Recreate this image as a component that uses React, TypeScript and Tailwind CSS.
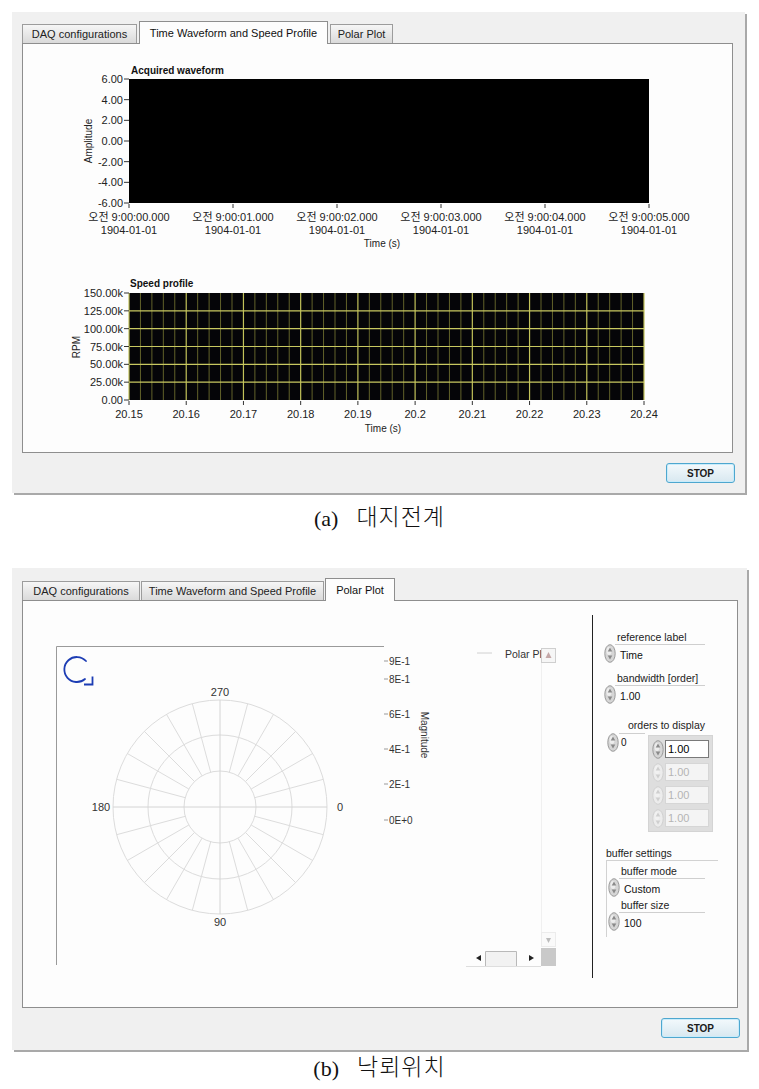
import React from "react";

const ui = "font-['Liberation_Sans','Noto_Sans_CJK_KR',sans-serif]";

function Tab({ label, active, className }: { label: string; active?: boolean; className: string }) {
  return (
    <div
      className={
        active
          ? `relative z-10 -mb-px flex h-[23px] items-center justify-center border border-b-0 border-[#8e8e8e] bg-[#fdfdfd] text-[11px] text-[#111] ${className}`
          : `flex h-[19px] items-center justify-center border border-b-0 border-[#9c9c9c] bg-linear-to-b from-[#f6f6f6] to-[#dadada] text-[11px] text-[#222] ${className}`
      }
    >
      {label}
    </div>
  );
}

function StopButton({ className }: { className: string }) {
  return (
    <div
      className={`flex h-[20px] items-center justify-center rounded-[3px] border border-[#4ea7cf] bg-linear-to-b from-[#f3f9fc] to-[#d8e8f0] text-[10px] font-bold text-[#1a1a1a] shadow-[inset_0_0_0_1px_#c9ecfb] ${className}`}
    >
      STOP
    </div>
  );
}

function Spinner({ dim }: { dim?: boolean }) {
  return (
    <svg width={12} height={19} viewBox="0 0 12 19" className="block shrink-0">
      <ellipse cx={6} cy={9.5} rx={5.2} ry={8.8} fill={dim ? "#ececec" : "#d6d6d6"} stroke={dim ? "#d0d0d0" : "#9a9a9a"} />
      <ellipse cx={5} cy={7} rx={2.5} ry={4} fill="#f2f2f2" opacity={0.8} />
      <path d="M6 3.5 L8.3 7.5 H3.7Z" fill={dim ? "#cfcfcf" : "#8a8a8a"} />
      <path d="M6 15.5 L8.3 11.5 H3.7Z" fill={dim ? "#cfcfcf" : "#8a8a8a"} />
    </svg>
  );
}

function WaveformGraph() {
  const yLabels = ["6.00", "4.00", "2.00", "0.00", "-2.00", "-4.00", "-6.00"];
  return (
    <svg width={630} height={188} viewBox="70 62 630 188" className="block">
      <text x={131} y={74} fontSize={10} fontWeight="bold" fill="#111">
        Acquired waveform
      </text>
      <rect x={129} y={79} width={520} height={124} fill="#000" />
      {yLabels.map((l, k) => {
        const y = 79 + (k * 124) / 6;
        return (
          <g key={l}>
            <line x1={124} x2={129} y1={y} y2={y} stroke="#333" />
            <text x={123} y={y + 4} fontSize={11} textAnchor="end" fill="#222">
              {l}
            </text>
          </g>
        );
      })}
      <text transform="rotate(-90 92 141)" x={92} y={141} fontSize={10} textAnchor="middle" fill="#222">
        Amplitude
      </text>
      {[0, 1, 2, 3, 4, 5].map((i) => {
        const x = 129 + i * 104;
        return (
          <g key={i}>
            <line x1={x} x2={x} y1={204} y2={208} stroke="#333" />
            <text x={x} y={221} fontSize={11} textAnchor="middle" fill="#222">
              {`오전 9:00:0${i}.000`}
            </text>
            <text x={x} y={234} fontSize={11} textAnchor="middle" fill="#222">
              1904-01-01
            </text>
          </g>
        );
      })}
      <text x={382} y={247} fontSize={10} textAnchor="middle" fill="#222">
        Time (s)
      </text>
    </svg>
  );
}

function SpeedGraph() {
  const yLabels = ["150.00k", "125.00k", "100.00k", "75.00k", "50.00k", "25.00k", "0.00"];
  const xLabels = ["20.15", "20.16", "20.17", "20.18", "20.19", "20.2", "20.21", "20.22", "20.23", "20.24"];
  const left = 129;
  const right = 644;
  const top = 293;
  const bottom = 400;
  const step = (right - left) / 9;
  const minors: number[] = [];
  for (let i = 0; i < 45; i++) if (i % 5 !== 0) minors.push(left + (i * step) / 5);
  return (
    <svg width={630} height={160} viewBox="70 276 630 160" className="block">
      <text x={130} y={287} fontSize={10} fontWeight="bold" fill="#111">
        Speed profile
      </text>
      <rect x={left} y={top} width={right - left} height={bottom - top} fill="#050508" />
      {minors.map((x) => (
        <line key={x} x1={x} x2={x} y1={top} y2={bottom} stroke="#62622a" strokeWidth={1} />
      ))}
      {xLabels.map((_, i) => {
        const x = left + i * step;
        return <line key={i} x1={x} x2={x} y1={top} y2={bottom} stroke="#c2c25a" strokeWidth={1.2} />;
      })}
      {yLabels.map((l, k) => {
        const y = top + (k * (bottom - top)) / 6;
        return (
          <g key={l}>
            {k > 0 && k < 6 ? <line x1={left} x2={right} y1={y} y2={y} stroke="#c8c860" strokeWidth={1.2} /> : null}
            <line x1={124} x2={129} y1={y} y2={y} stroke="#333" />
            <text x={123} y={y + 4} fontSize={11} textAnchor="end" fill="#222">
              {l}
            </text>
          </g>
        );
      })}
      <text transform="rotate(-90 80 347)" x={80} y={347} fontSize={10} textAnchor="middle" fill="#222">
        RPM
      </text>
      {xLabels.map((l, i) => {
        const x = left + i * step;
        return (
          <g key={l}>
            <line x1={x} x2={x} y1={401} y2={405} stroke="#333" />
            <text x={x} y={418} fontSize={11} textAnchor="middle" fill="#222">
              {l}
            </text>
          </g>
        );
      })}
      <text x={383} y={432} fontSize={10} textAnchor="middle" fill="#222">
        Time (s)
      </text>
    </svg>
  );
}

function PolarGraph() {
  const cx = 220;
  const cy = 807;
  const rings = [36, 72, 107];
  const spokes: number[] = [];
  for (let i = 0; i < 24; i++) if (i % 6 !== 0) spokes.push((i * 15 * Math.PI) / 180);
  const mag = [
    ["9E-1", 661],
    ["8E-1", 679],
    ["6E-1", 714],
    ["4E-1", 749],
    ["2E-1", 784],
    ["0E+0", 820],
  ] as const;
  return (
    <svg width={510} height={335} viewBox="50 640 510 335" className="block">
      <path d="M56.5 965 V646.5 H384" stroke="#9a9a9a" fill="none" />
      {/* rotation direction icon */}
      <path d="M86 661 A12.5 12.5 0 1 0 85 679" stroke="#1d3db4" strokeWidth={1.8} fill="none" strokeLinecap="round" />
      <path d="M84 684.5 H92.5 V676.5" stroke="#1d3db4" strokeWidth={1.8} fill="none" />
      {rings.map((r) => (
        <circle key={r} cx={cx} cy={cy} r={r} fill="none" stroke="#dcdcdc" />
      ))}
      {spokes.map((a) => (
        <line
          key={a}
          x1={cx + 36 * Math.cos(a)}
          y1={cy + 36 * Math.sin(a)}
          x2={cx + 107 * Math.cos(a)}
          y2={cy + 107 * Math.sin(a)}
          stroke="#dcdcdc"
        />
      ))}
      <line x1={cx - 107} x2={cx + 107} y1={cy} y2={cy} stroke="#d4d4d4" />
      <line x1={cx} x2={cx} y1={cy - 107} y2={cy + 107} stroke="#d4d4d4" />
      <text x={cx} y={696} fontSize={11} textAnchor="middle" fill="#333">
        270
      </text>
      <text x={101} y={811} fontSize={11} textAnchor="middle" fill="#333">
        180
      </text>
      <text x={340} y={811} fontSize={11} textAnchor="middle" fill="#333">
        0
      </text>
      <text x={cx} y={926} fontSize={11} textAnchor="middle" fill="#333">
        90
      </text>
      {mag.map(([l, y]) => (
        <g key={l}>
          <line x1={384} x2={388} y1={y} y2={y} stroke="#999" />
          <text x={389} y={y + 3.5} fontSize={10} fill="#333">
            {l}
          </text>
        </g>
      ))}
      <text transform="rotate(90 421 735)" x={421} y={735} fontSize={10} textAnchor="middle" fill="#333">
        Magnitude
      </text>
      <line x1={477} x2={492} y1={653} y2={653} stroke="#d0d0d0" />
      <text x={505} y={658} fontSize={10.5} fill="#333">
        Polar Pl
      </text>
      <rect x={541.5} y={648.5} width={14} height={14} fill="#f6f6f6" stroke="#cfcfcf" />
      <path d="M548.5 652 L551.5 658 H545.5Z" fill="#c4a8a8" />
      <line x1={541.5} x2={541.5} y1={663} y2={932} stroke="#f0f0f0" />
      <rect x={541.5} y={932.5} width={14} height={14} fill="#fafafa" stroke="#ececec" />
      <path d="M548.5 943 L551 938 H546Z" fill="#bcbcbc" />
      <rect x={541} y={948} width={15} height={18} fill="#c9c9c9" />
      <line x1={466} x2={541} y1={966.5} y2={966.5} stroke="#dedede" />
      <path d="M476 958 L481 955 V961Z" fill="#222" />
      <path d="M485.5 966 V951.5 H516.5 V966" fill="#f2f2f2" stroke="#b9b9b9" />
      <path d="M534 958 L529 955 V961Z" fill="#222" />
    </svg>
  );
}

function ValueRow({ value, box }: { value: string; box: string }) {
  return (
    <div className="flex h-[20px] items-start">
      <Spinner />
      <div className={`ml-[-1px] h-[20px] border-t border-[#cfcfcf] pl-[5px] text-[10.5px] leading-[20px] text-[#111] ${box}`}>
        {value}
      </div>
    </div>
  );
}

function Controls() {
  return (
    <div className="ml-[11px] mt-[29px] flex w-[118px] flex-col text-[10.5px] text-[#222]">
      <div className="h-[14px] pl-[13px] leading-[14px]">reference label</div>
      <ValueRow value="Time" box="w-[90px]" />
      <div className="mt-[7px] h-[14px] pl-[13px] leading-[14px]">bandwidth [order]</div>
      <ValueRow value="1.00" box="w-[90px]" />
      <div className="mt-[13px] h-[14px] pl-[24px] leading-[14px]">orders to display</div>
      <div className="flex">
        <div className="ml-[3px] mt-[1px] flex items-start">
          <Spinner />
          <div className="h-[18px] w-[26px] border-t border-[#cfcfcf] pl-[2px] text-[10px] leading-[18px] text-[#111]">0</div>
        </div>
        <div className="ml-[3px] mt-[3px] flex w-[65px] flex-col gap-[5px] border border-[#d4d4d4] bg-[#dedede] px-[3px] py-[4px]">
          <div className="flex h-[18px] items-center">
            <Spinner />
            <div className="ml-px flex h-[18px] flex-1 items-center border border-[#7a7a7a] bg-white pl-[2px] text-[11px] text-black">1.00</div>
          </div>
          {[0, 1, 2].map((i) => (
            <div key={i} className="flex h-[18px] items-center">
              <Spinner dim />
              <div className="ml-px flex h-[18px] flex-1 items-center border border-[#d6d6d6] bg-[#f4f4f4] pl-[2px] text-[11px] text-[#b4b4b4]">
                1.00
              </div>
            </div>
          ))}
        </div>
      </div>
      <div className="mt-[14px] h-[14px] pl-[2px] leading-[14px]">buffer settings</div>
      <div className="ml-[2px] flex h-[77px] w-[112px] flex-col border-l border-t border-[#d2d2d2] pt-[3px]">
        <div className="h-[14px] pl-[14px] leading-[14px]">buffer mode</div>
        <div className="ml-px">
          <ValueRow value="Custom" box="w-[86px]" />
        </div>
        <div className="h-[14px] pl-[14px] leading-[14px]">buffer size</div>
        <div className="ml-px">
          <ValueRow value="100" box="w-[86px]" />
        </div>
      </div>
    </div>
  );
}

function PanelA() {
  return (
    <div className="ml-[12px] mt-[12px] flex h-[481px] w-[733px] flex-col bg-[#f0f0f0] pl-[10px] pt-[10px] shadow-[2px_2px_0_#a9a9a9]">
      <div className="flex h-[21px] items-end gap-[2px]">
        <Tab label="DAQ configurations" className="w-[115px]" />
        <Tab label="Time Waveform and Speed Profile" active className="w-[189px]" />
        <Tab label="Polar Plot" className="w-[63px]" />
      </div>
      <div className="flex h-[410px] w-[711px] flex-col border border-[#8e8e8e] bg-[#fdfdfd] pl-[47px] pt-[18px]">
        <WaveformGraph />
        <div className="mt-[26px]">
          <SpeedGraph />
        </div>
      </div>
      <div className="flex justify-end pr-[10px] pt-[10px]">
        <StopButton className="w-[69px]" />
      </div>
    </div>
  );
}

function PanelB() {
  return (
    <div className="ml-[12px] flex h-[482px] w-[735px] flex-col bg-[#f0f0f0] pl-[10px] pt-[12px] shadow-[2px_2px_0_#a9a9a9]">
      <div className="flex h-[20px] items-end gap-px">
        <Tab label="DAQ configurations" className="w-[118px]" />
        <Tab label="Time Waveform and Speed Profile" className="w-[183px]" />
        <Tab label="Polar Plot" active className="w-[70px]" />
      </div>
      <div className="flex h-[408px] w-[716px] border border-[#8e8e8e] bg-[#fdfdfd]">
        <div className="ml-[27px] mt-[39px]">
          <PolarGraph />
        </div>
        <div className="ml-[32px] mt-[14px] h-[363px] w-px bg-[#222]" />
        <Controls />
      </div>
      <div className="flex justify-end pr-[7px] pt-[10px]">
        <StopButton className="w-[79px]" />
      </div>
    </div>
  );
}

function Caption({ tag, text, className }: { tag: string; text: string; className: string }) {
  return (
    <div
      className={`flex items-center justify-center gap-[18px] font-['Liberation_Serif','Noto_Sans_CJK_KR',serif] text-[22px] text-[#111] ${className}`}
    >
      <span>{tag}</span>
      <span className="text-[23px] font-light tracking-[1px]">{text}</span>
    </div>
  );
}

export default function App() {
  return (
    <div className={`flex h-[1089px] w-[759px] flex-col bg-white ${ui}`}>
      <PanelA />
      <Caption tag="(a)" text="대지전계" className="h-[50px]" />
      <div className="mt-[25px]">
        <PanelB />
      </div>
      <Caption tag="(b)" text="낙뢰위치" className="h-[37px]" />
    </div>
  );
}
